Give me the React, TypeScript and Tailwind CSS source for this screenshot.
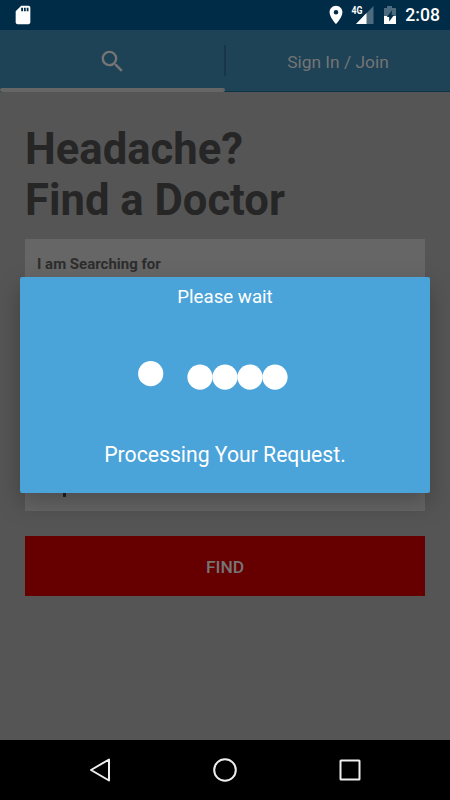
import { MdSearch, MdPlace, MdSdCard } from 'react-icons/md'

const dots = [188, 213, 238, 263]

function StatusBar() {
  return (
    <header className="flex h-[30px] shrink-0 items-center justify-between bg-[#002c48] pr-[10px] pl-[12px] text-white">
      <MdSdCard className="size-[22px]" />
      <div className="flex h-full items-center">
        <MdPlace className="mr-[4px] size-[22px]" />
        <svg width="23" height="20" viewBox="0 0 23 20">
          <path d="M22.5 1v18H5z" fill="#4d6b7f" />
          <path d="M15.5 8v11H5z" fill="#fff" />
          <text x="0.5" y="9" fill="#fff" fontSize="10" fontWeight="700" textLength="11" lengthAdjust="spacingAndGlyphs">4G</text>
        </svg>
        <svg className="ml-[9px]" width="14" height="20" viewBox="0 0 14 20">
          <path d="M1 3h3V1h5v2h4v16H1z" fill="#4d6b7f" />
          <path d="M1 11h12v8H1z" fill="#fff" />
          <path d="M9.2 5.2L3.8 12H6.2v4.6L11 10H8.5z" fill="#002c48" />
        </svg>
        <span className="ml-[8px] pt-[2px] text-[17.6px] leading-none font-medium">2:08</span>
      </div>
    </header>
  )
}

function Tabs() {
  return (
    <nav className="relative flex h-[62px] shrink-0 items-center border-b border-[#0d3349] bg-[#1e4256] text-[#757575]">
      <div className="flex w-[224px] justify-center pt-px">
        <MdSearch className="size-[29px]" />
      </div>
      <div className="h-[31px] w-[2px] bg-[#18364a]" />
      <div className="flex-1 pt-[3px] text-center text-[17.4px]">Sign In / Join</div>
      <div className="absolute -bottom-px left-0 h-1 w-[225px] rounded-[2px] bg-[#666]" />
    </nav>
  )
}

function Dialog() {
  return (
    <div className="absolute top-[277px] left-[20px] flex h-[216px] w-[410px] flex-col items-center rounded-[2px] bg-[#4aa3d9] text-white shadow-[0_10px_24px_rgba(0,0,0,0.25)]">
      <h2 className="mt-[7px] text-[18.7px] leading-[26px]">Please wait</h2>
      <svg className="mt-[42px]" width="410" height="50" viewBox="20 352 410 50" fill="#fff">
        <circle cx="150.7" cy="373.7" r="12.6" />
        {dots.map((x) => (
          <circle key={x} cx={x + 12} cy="377.1" r="12.6" />
        ))}
      </svg>
      <p className="mt-[38px] text-[21.2px] leading-[30px]">Processing Your Request.</p>
    </div>
  )
}

function App() {
  return (
    <div className="relative flex h-[800px] w-[450px] flex-col overflow-hidden bg-[#555] font-['Roboto',sans-serif]">
      <StatusBar />
      <Tabs />

      <main className="flex-1 px-[25px] pt-[32px]">
        <h1 className="text-[43.6px] leading-[51px] font-bold text-[#262626]">
          Headache?
          <br />
          Find a Doctor
        </h1>

        {/* Search form, mostly behind the dialog */}
        <section className="mt-[13px] flex h-[272px] flex-col justify-between bg-[#666] px-[12px] pt-[15px] pb-[14px] text-[#2d2d2d]">
          <label className="text-[15px] leading-[20px] font-bold">I am Searching for</label>
          <div className="ml-[26px] h-[20px] w-[3px] bg-[#222]" />
        </section>

        <button className="mt-[25px] h-[60px] w-full bg-[#660000] pt-[2px] text-[17.4px] font-medium text-[#757575]">FIND</button>
      </main>

      <footer className="flex h-[60px] shrink-0 items-center justify-around bg-black px-[37px]">
        <svg width="24" height="24" viewBox="0 0 24 24" fill="none" stroke="#eee" strokeWidth="2">
          <path d="M21 1.5v21L3 12z" strokeLinejoin="round" />
        </svg>
        <svg width="24" height="24" viewBox="0 0 24 24" fill="none" stroke="#eee" strokeWidth="2">
          <circle cx="12" cy="12" r="10.8" />
        </svg>
        <svg width="24" height="24" viewBox="0 0 24 24" fill="none" stroke="#eee" strokeWidth="2">
          <rect x="2.5" y="2.5" width="19" height="19" rx="0.5" />
        </svg>
      </footer>

      <Dialog />
    </div>
  )
}

export default App
